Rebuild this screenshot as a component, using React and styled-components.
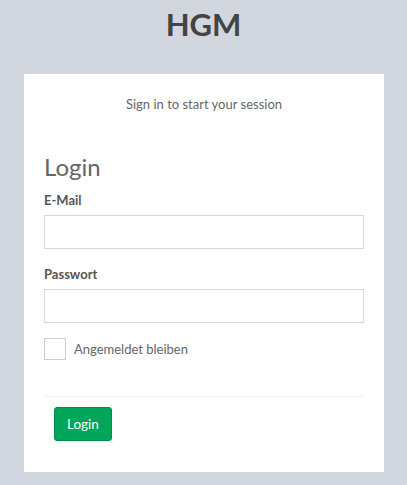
import React from "react";
import styled, { createGlobalStyle } from "styled-components";

const Global = createGlobalStyle`
  html, body { margin: 0; padding: 0; background: #d2d6de; }
  body { font-family: "Lato", "Open Sans", sans-serif; color: #333; }
  * { box-sizing: border-box; }
`;

const Page = styled.div`
  width: 407px;
  min-height: 485px;
  background: #d2d6de;
  display: flex;
  flex-direction: column;
  align-items: center;
`;

const Logo = styled.div`
  font-size: 31px;
  font-weight: 700;
  color: #444;
  line-height: 48px;
  height: 48px;
  margin-bottom: 26px;
  text-align: center;
`;

const Card = styled.div`
  width: 360px;
  background: #fff;
  padding: 20px;
  margin-left: 1px;
`;

const Msg = styled.p`
  margin: 0;
  padding: 0 20px 20px;
  text-align: center;
  font-size: 13px;
  line-height: 20px;
  color: #666;
`;

const Heading = styled.h3`
  margin: 20px 0 10px;
  font-size: 24px;
  font-weight: 400;
  line-height: 26px;
  color: #666;
`;

const Group = styled.div`
  margin-bottom: 15px;
  display: flex;
  flex-direction: column;
`;

const Label = styled.label`
  font-size: 13px;
  font-weight: 700;
  line-height: 20px;
  color: #555;
  margin-bottom: 5px;
`;

const Input = styled.input`
  width: 320px;
  height: 34px;
  border: 1px solid #d2d6de;
  border-radius: 0;
  outline: none;
  padding: 6px 12px;
  font-family: inherit;
  font-size: 14px;
  background: #fff;
`;

const CheckRow = styled.label`
  display: flex;
  align-items: center;
  gap: 8px;
  margin: 1px 0 36px;
  font-size: 13px;
  color: #666;
  line-height: 20px;
`;

const Box = styled.span`
  width: 22px;
  height: 22px;
  border: 1px solid #d0ccc8;
  background: #fff;
  display: inline-block;
`;

const Rule = styled.hr`
  margin: 0;
  border: 0;
  border-top: 1px solid #f4f4f4;
`;

const Footer = styled.div`
  padding: 10px 10px 11px;
  display: flex;
`;

const Button = styled.button`
  height: 34px;
  padding: 0 12px;
  background: #00a65a;
  border: 1px solid #008d4c;
  border-radius: 3px;
  color: #fff;
  font-family: inherit;
  font-size: 13.5px;
  cursor: pointer;
`;

export default function App() {
  return (
    <Page>
      <Global />
      <Logo>HGM</Logo>
      <Card>
        <Msg>Sign in to start your session</Msg>
        <Heading>Login</Heading>
        <Group>
          <Label>E-Mail</Label>
          <Input type="email" />
        </Group>
        <Group>
          <Label>Passwort</Label>
          <Input type="password" />
        </Group>
        <CheckRow>
          <Box />
          Angemeldet bleiben
        </CheckRow>
        <Rule />
        <Footer>
          <Button>Login</Button>
        </Footer>
      </Card>
    </Page>
  );
}
